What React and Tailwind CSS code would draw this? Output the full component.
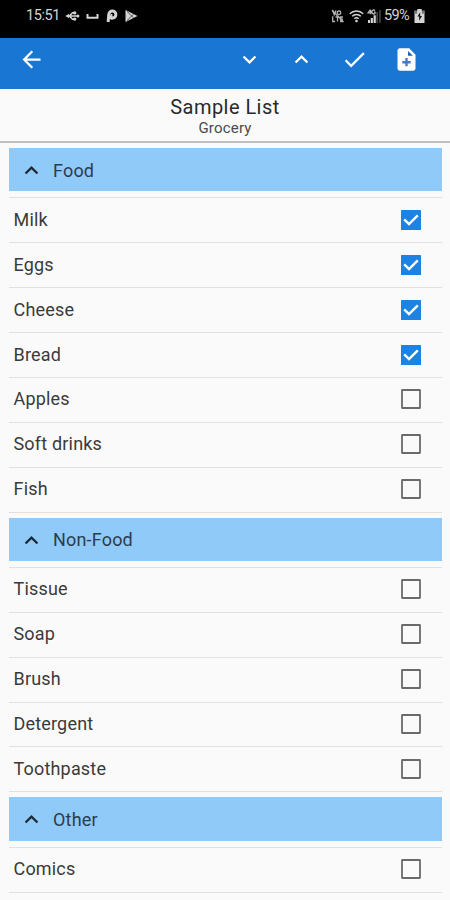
import { useState } from 'react'
import { MdArrowBack, MdCheck, MdExpandLess, MdExpandMore } from 'react-icons/md'

const SECTIONS = [
    {
        name: 'Food',
        items: [
            { name: 'Milk', done: true },
            { name: 'Eggs', done: true },
            { name: 'Cheese', done: true },
            { name: 'Bread', done: true },
            { name: 'Apples' },
            { name: 'Soft drinks' },
            { name: 'Fish' },
        ],
    },
    {
        name: 'Non-Food',
        items: [
            { name: 'Tissue' },
            { name: 'Soap' },
            { name: 'Brush' },
            { name: 'Detergent' },
            { name: 'Toothpaste' },
        ],
    },
    { name: 'Other', items: [{ name: 'Comics' }] },
]

// ---- Status bar -------------------------------------------------------------
function StatusBar() {
    return (
        <div className="flex h-[37.5px] items-start justify-between bg-black pt-[7px] pr-[25px] pl-[26px] text-[14.5px] leading-[17px] text-[#d4d4d4]">
            <div className="flex items-center">
                <span className="w-[39px] tracking-[-0.4px]">15:51</span>
                {/* usb */}
                <svg className="h-[12px] w-[15px]" viewBox="0 0 15 12" fill="none" stroke="currentColor" strokeWidth="1.5">
                    <path d="M3 6h11M4.5 6l3-3.3h2.5M4.5 6l3 3.3H10" />
                    <path d="M.3 6l3.9-2.3v4.6z" fill="currentColor" stroke="none" />
                    <circle cx="9.7" cy="2.9" r="1.7" fill="currentColor" stroke="none" />
                    <circle cx="9.7" cy="9.1" r="1.7" fill="currentColor" stroke="none" />
                    <circle cx="12.9" cy="6" r="1.5" fill="currentColor" stroke="none" />
                </svg>
                {/* keyboard space bar */}
                <svg className="ml-[6px] h-[12px] w-[13px]" viewBox="0 0 13 12" fill="none" stroke="currentColor" strokeWidth="2">
                    <path d="M1.5 4v3.7h10V4" />
                </svg>
                {/* P badge */}
                <svg className="ml-[7px] h-[14px] w-[12px]" viewBox="0 0 12 14" fill="none" stroke="currentColor">
                    <circle cx="6.4" cy="5.6" r="3.5" strokeWidth="3" />
                    <path d="M2.9 5.5L2.1 13" strokeWidth="3" />
                    <path d="M5.6 5v5.6" strokeWidth="1.6" />
                </svg>
                {/* play store */}
                <svg className="ml-[7px] h-[14px] w-[13px]" viewBox="0 0 13 14">
                    <path d="M.5 1l12 6L.5 13z" fill="currentColor" />
                    <path d="M2 2.4L8.7 9M2 11.6L8.7 5" stroke="#444" strokeWidth=".9" />
                </svg>
            </div>
            <div className="flex items-center">
                {/* VoLTE, crossed out */}
                <svg className="h-[14px] w-[13px]" viewBox="0 0 13 14" fill="none" stroke="#b0b0b0" strokeWidth="1.3">
                    <path d="M1.5 1.5l1.8 4.2 1.7-4.2" />
                    <circle cx="8" cy="3.8" r="1.8" />
                    <path d="M1.7 7.3v5.2h2.4M4.5 8h4M6.5 8v4.5M12 8H9.7v4.5H12M9.5 10.2H12M1 1l11.5 12" />
                </svg>
                {/* wifi */}
                <svg className="ml-[5px] h-[14px] w-[15px]" viewBox="0 0 15 14" fill="none" stroke="currentColor" strokeWidth="1.5">
                    <path d="M.8 4.7a9.6 9.6 0 0 1 13.4 0M3.2 7.3a6.2 6.2 0 0 1 8.6 0M5.4 9.8a3.1 3.1 0 0 1 4.2 0" />
                    <circle cx="7.5" cy="12" r="1.3" fill="currentColor" stroke="none" />
                </svg>
                {/* signal */}
                <svg className="ml-[3px] h-[14px] w-[14px]" viewBox="0 0 14 14">
                    <path d="M1 11h2v3H1zM3.7 9h2.2v5H3.7zM6.6 6.3h2.2V14H6.6z" fill="currentColor" />
                    <path d="M9.4 3h1.5v11H9.4zM12.2 1h1.5v13h-1.5z" fill="#4a4a4a" />
                    <path d="M3.4.7L1.2 3.8h3M3.6.8v4.4M8 1.5A1.9 1.9 0 1 0 8 4.4V3.1H7" fill="none" stroke="#b8b8b8" strokeWidth="1.3" />
                </svg>
                <span className="ml-[3px] w-[30px] tracking-[-0.6px]">59%</span>
                {/* battery */}
                <svg className="h-[14px] w-[11px]" viewBox="0 0 11 14">
                    <path d="M3.3 0h4.4v1.8h2.8V14H.5V1.8h2.8z" fill="currentColor" />
                    <path d="M.5 1.8h2.6v3H.5zM7.9 1.8h2.6v3H7.9z" fill="#777" />
                    <path d="M6.2 3.2L3.4 7.6h1.8v4.2L8 7H6.2z" fill="#111" />
                </svg>
            </div>
        </div>
    )
}

// Filled page with a folded corner and a plus
function NewListIcon({ className }) {
    return (
        <svg className={className} viewBox="0 0 24 24">
            <path
                fill="currentColor"
                d="M14.4 2H6c-1.1 0-2 .9-2 2v16c0 1.1.9 2 2 2h12c1.1 0 2-.9 2-2V7.7z"
            />
            <path fill="#1760b4" d="M13.4 4.4l4.2 4.3h-4.2z" />
            <path fill="none" stroke="#3f7cc4" strokeWidth="2.1" d="M12 10.7v7.4M8.3 14.4h7.4" />
        </svg>
    )
}

function AppBar() {
    return (
        <div className="flex h-[51.5px] items-start justify-between bg-[#1976d2] pt-[8px] pr-[30px] pl-[18px] text-white">
            <MdArrowBack className="size-[27px]" />
            <div className="flex gap-[25.5px]">
                <MdExpandMore className="size-[27px]" />
                <MdExpandLess className="size-[27px]" />
                <MdCheck className="size-[27px]" />
                <NewListIcon className="size-[27px]" />
            </div>
        </div>
    )
}

// ---- List -------------------------------------------------------------------
function Checkbox({ checked, onClick }) {
    return (
        <button type="button" role="checkbox" aria-checked={checked} onClick={onClick} className="size-5">
            <svg className="size-5" viewBox="0 0 20 20" fill="none">
                {checked ? (
                    <>
                        <rect width="20" height="20" rx=".6" fill="#1e82e0" />
                        <path d="M3.2 9.4l4.8 4.7 8.8-8.8" stroke="#fff" strokeWidth="2.4" />
                    </>
                ) : (
                    <rect x="1" y="1" width="18" height="18" rx=".2" stroke="#6a6a6a" strokeWidth="1.8" />
                )}
            </svg>
        </button>
    )
}

function Section({ section, checked, onToggle }) {
    return (
        <section className="pt-[5px]">
            <div className="flex h-[43.3px] items-center bg-[#90caf9] pt-[2px] pl-[8.5px] text-[#2a3d4f]">
                <MdExpandLess className="size-[27px] text-[#1c2833]" />
                <h2 className="ml-[8.5px]">{section.name}</h2>
            </div>
            <div className="h-[7.1px] border-b border-[#e0e0e0]" />
            {section.items.map((item) => (
                <div key={item.name} className="flex h-[44.88px] items-center justify-between border-b border-[#e0e0e0] pr-[21px] pb-[0.8px] pl-[4.5px]">
                    <span>{item.name}</span>
                    <Checkbox checked={!!checked[item.name]} onClick={() => onToggle(item.name)} />
                </div>
            ))}
        </section>
    )
}

export default function App() {
    const [checked, setChecked] = useState(() =>
        Object.fromEntries(SECTIONS.flatMap((s) => s.items).map((i) => [i.name, !!i.done]))
    )

    const toggle = (name) => setChecked((prev) => ({ ...prev, [name]: !prev[name] }))

    return (
        <div className="h-[900px] w-[450px] overflow-hidden bg-[#fafafa] font-['Roboto',sans-serif] text-[#3a3a3a]">
            <StatusBar />
            <AppBar />
            <header className="h-[54px] border-b-2 border-[#c0c0c0] pt-[6px] text-center">
                <h1 className="text-[20px] leading-[24px] tracking-[0.45px] text-[#2a2a2a]">Sample List</h1>
                <p className="text-[15px] leading-[18px] tracking-[0.2px] text-[#4a4a4a]">Grocery</p>
            </header>
            <main className="mr-[8.5px] ml-[9px] text-[18px] leading-6 tracking-[0.18px]">
                {SECTIONS.map((s) => (
                    <Section key={s.name} section={s} checked={checked} onToggle={toggle} />
                ))}
            </main>
        </div>
    )
}
